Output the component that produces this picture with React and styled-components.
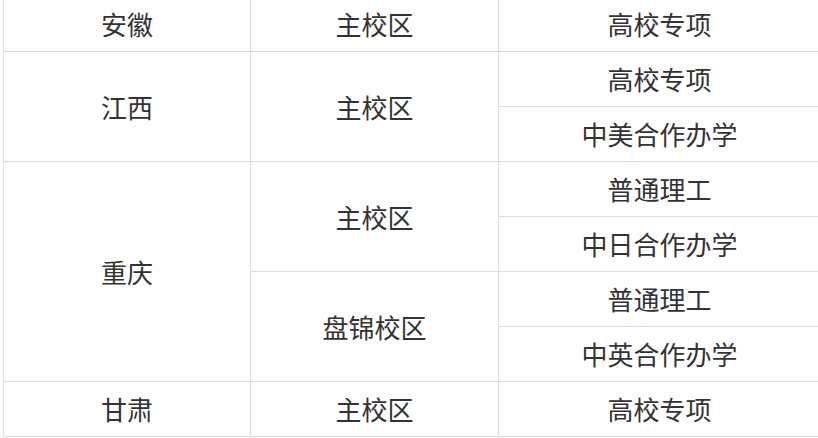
import React from "react";
import styled, { createGlobalStyle } from "styled-components";

const Global = createGlobalStyle`
  html, body { margin: 0; padding: 0; background: #fff; overflow: hidden; }
  body { font-family: "Noto Sans CJK SC", "Noto Sans", sans-serif; }
`;

const Wrap = styled.div`
  padding-left: 3px;
  margin-top: -4px;
`;

const Table = styled.table`
  border-collapse: collapse;
  table-layout: fixed;
  width: 817px;
`;

const Col = styled.col`
  width: ${(p) => p.$w}px;
`;

const Cell = styled.td`
  border: 1px solid #dddddd;
  height: 54px;
  padding: 0;
  text-align: center;
  vertical-align: middle;
  font-size: 26px;
  line-height: 30px;
  color: #333333;
  white-space: nowrap;
`;

const data = [
  { prov: "安徽", campuses: [{ name: "主校区", items: ["高校专项"] }] },
  { prov: "江西", campuses: [{ name: "主校区", items: ["高校专项", "中美合作办学"] }] },
  {
    prov: "重庆",
    campuses: [
      { name: "主校区", items: ["普通理工", "中日合作办学"] },
      { name: "盘锦校区", items: ["普通理工", "中英合作办学"] },
    ],
  },
  { prov: "甘肃", campuses: [{ name: "主校区", items: ["高校专项"] }] },
];

export default function App() {
  const rows = [];
  data.forEach((p, pi) => {
    const total = p.campuses.reduce((s, c) => s + c.items.length, 0);
    p.campuses.forEach((c, ci) => {
      c.items.forEach((it, ii) => {
        rows.push(
          <tr key={`${pi}-${ci}-${ii}`}>
            {ci === 0 && ii === 0 && <Cell rowSpan={total}>{p.prov}</Cell>}
            {ii === 0 && <Cell rowSpan={c.items.length}>{c.name}</Cell>}
            <Cell>{it}</Cell>
          </tr>
        );
      });
    });
  });
  return (
    <>
      <Global />
      <Wrap>
        <Table>
          <colgroup>
            <Col $w={247} />
            <Col $w={248} />
            <Col $w={322} />
          </colgroup>
          <tbody>{rows}</tbody>
        </Table>
      </Wrap>
    </>
  );
}
